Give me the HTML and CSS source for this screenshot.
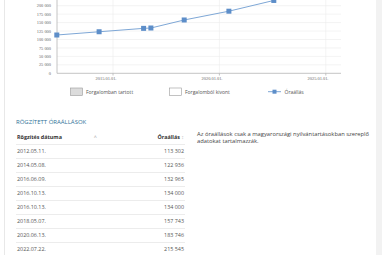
FILE: index.html
```html
<!DOCTYPE html>
<html lang="hu">
  <head>
    <meta charset="UTF-8" />
    <meta name="viewport" content="width=device-width, initial-scale=1.0" />
    <title>Óraállások</title>
    <link rel="stylesheet" href="styles.css">
  </head>
  <body>
    <div class="page">
      <div class="card">
        <!-- Odometer chart (scrolled, top is cut off) -->
        <svg class="chart" width="371" height="102" viewBox="5 0 371 102">
          <g class="grid">
            <line x1="57" y1="64.85" x2="341" y2="64.85" />
            <line x1="57" y1="56.4" x2="341" y2="56.4" />
            <line x1="57" y1="47.95" x2="341" y2="47.95" />
            <line x1="57" y1="39.5" x2="341" y2="39.5" />
            <line x1="57" y1="31.05" x2="341" y2="31.05" />
            <line x1="57" y1="22.6" x2="341" y2="22.6" />
            <line x1="57" y1="14.15" x2="341" y2="14.15" />
            <line x1="57" y1="5.7" x2="341" y2="5.7" />
            <line x1="113" y1="-5" x2="113" y2="73.3" />
            <line x1="219.4" y1="-5" x2="219.4" y2="73.3" />
            <line x1="325.8" y1="-5" x2="325.8" y2="73.3" />
          </g>
          <g class="axis">
            <line x1="57" y1="-5" x2="57" y2="73.3" />
            <line x1="57" y1="73.3" x2="341" y2="73.3" />
            <line x1="113" y1="73.3" x2="113" y2="75.5" />
            <line x1="219.4" y1="73.3" x2="219.4" y2="75.5" />
            <line x1="325.8" y1="73.3" x2="325.8" y2="75.5" />
          </g>
          <g class="y-labels">
            <text x="51" y="7.3">200 000</text>
            <text x="51" y="15.75">175 000</text>
            <text x="51" y="24.2">150 000</text>
            <text x="51" y="32.65">125 000</text>
            <text x="51" y="41.1">100 000</text>
            <text x="51" y="49.55">75 000</text>
            <text x="51" y="58">50 000</text>
            <text x="51" y="66.45">25 000</text>
            <text x="51" y="74.9">0</text>
          </g>
          <g class="x-labels">
            <text x="106" y="80">2015.01.01.</text>
            <text x="212" y="80">2020.01.01.</text>
            <text x="318" y="80">2025.01.01.</text>
          </g>
          <polyline class="series" points="56.8,35 99.1,31.75 143.6,28.36 150.9,28 184.2,19.98 228.9,11.2 273.8,0.45" />
          <g class="markers">
            <rect x="54.3" y="32.5" width="5" height="5" />
            <rect x="96.6" y="29.25" width="5" height="5" />
            <rect x="141.1" y="25.86" width="5" height="5" />
            <rect x="148.4" y="25.5" width="5" height="5" />
            <rect x="181.7" y="17.48" width="5" height="5" />
            <rect x="226.4" y="8.7" width="5" height="5" />
            <rect x="271.3" y="-2.05" width="5" height="5" />
          </g>
          <g class="legend">
            <rect class="swatch-on" x="70.5" y="88" width="12" height="7.5" />
            <text x="86" y="94">Forgalomban tartott</text>
            <rect class="swatch-off" x="169.5" y="88" width="12" height="7.5" />
            <text x="185" y="94">Forgalomból kivont</text>
            <line class="series" x1="268" y1="91.7" x2="281" y2="91.7" />
            <rect class="marker" x="272.5" y="89.7" width="4" height="4" />
            <text x="284.5" y="94">Óraállás</text>
          </g>
        </svg>

        <section class="records">
          <h3 class="records-title">Rögzített óraállások</h3>
          <div class="records-body">
            <table class="records-table">
              <thead>
                <tr>
                  <th class="col-date">Rögzítés dátuma <span class="sort">˄</span></th>
                  <th class="col-value">Óraállás <span class="sort">↕</span></th>
                </tr>
              </thead>
              <tbody>
                <tr><td>2012.05.11.</td><td class="num">113 302</td></tr>
                <tr><td>2014.05.08.</td><td class="num">122 936</td></tr>
                <tr><td>2016.06.09.</td><td class="num">132 965</td></tr>
                <tr><td>2016.10.13.</td><td class="num">134 000</td></tr>
                <tr><td>2016.10.13.</td><td class="num">134 000</td></tr>
                <tr><td>2018.05.07.</td><td class="num">157 743</td></tr>
                <tr><td>2020.06.13.</td><td class="num">183 746</td></tr>
                <tr><td>2022.07.22.</td><td class="num">215 545</td></tr>
              </tbody>
            </table>
            <p class="records-note">Az óraállások csak a magyarországi nyilvántartásokban szereplő adatokat tartalmazzák.</p>
          </div>
        </section>
      </div>
    </div>
  </body>
</html>
```

FILE: styles.css
```css
* {
  margin: 0;
  padding: 0;
  box-sizing: border-box;
}

body {
  background-color: #f2f2f2;
  font-family: 'Open Sans', 'Liberation Sans', sans-serif;
  color: #333;
  overflow: hidden;
}

/* White page column with a light right gutter */
.page {
  width: 376px;
  height: 255px;
  background-color: #fff;
  padding-left: 4px;
}

.card {
  height: 100%;
  border-left: 1px solid #e8e8e8;
}

/* Chart */
.chart {
  display: block;
  overflow: hidden;
}

.grid line {
  stroke: #ebebeb;
  stroke-width: 0.6;
}

.axis line {
  stroke: #b5b5b5;
  stroke-width: 0.8;
}

.y-labels text {
  font-family: 'Liberation Serif', serif;
  font-size: 4.4px;
  fill: #666;
  text-anchor: end;
}

.x-labels text {
  font-family: 'Liberation Serif', serif;
  font-size: 4.4px;
  fill: #666;
  text-anchor: middle;
}

.series {
  fill: none;
  stroke: #7ea7d6;
  stroke-width: 1;
}

.markers rect,
.legend .marker {
  fill: #5d8ec9;
}

.legend text {
  font-size: 5px;
  fill: #555;
}

.swatch-on {
  fill: #dcdcdc;
  stroke: #9a9a9a;
  stroke-width: 0.6;
}

.swatch-off {
  fill: #fff;
  stroke: #9a9a9a;
  stroke-width: 0.6;
}

/* Recorded readings */
.records {
  padding: 16px 4px 0 11px;
}

.records-title {
  font-size: 6px;
  line-height: 8px;
  font-weight: normal;
  text-transform: uppercase;
  color: #2f7297;
  margin-bottom: 4px;
}

.records-body {
  display: grid;
  grid-template-columns: 169px 1fr;
  column-gap: 12px;
  align-items: start;
}

.records-table {
  border-collapse: collapse;
  width: 100%;
  font-size: 5.4px;
}

.records-table th,
.records-table td {
  height: 14px;
  padding: 0 1px;
  text-align: left;
  vertical-align: middle;
  border-bottom: 1px solid #ececec;
}

.records-table th {
  font-weight: bold;
  color: #333;
}

.records-table td {
  color: #555;
}

.records-table .col-date {
  width: 84px;
}

.col-date .sort {
  float: right;
  margin-right: 2px;
  color: #aaa;
  font-weight: normal;
}

.records-table .col-value,
.records-table .num {
  text-align: right;
}

.col-value .sort {
  color: #bbb;
  font-weight: normal;
}

.records-note {
  font-size: 5.8px;
  line-height: 7px;
  color: #444;
  margin-top: 1px;
}
```
